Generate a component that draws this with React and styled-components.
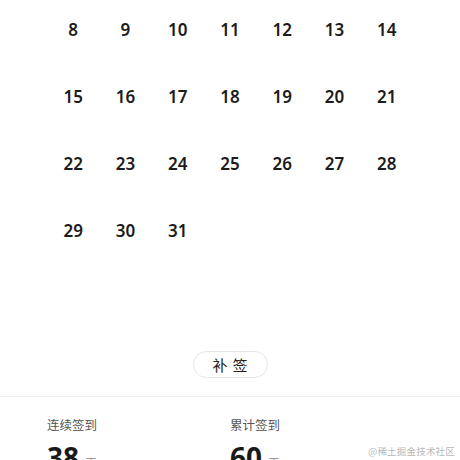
import React from "react";
import styled, { createGlobalStyle } from "styled-components";

const Global = createGlobalStyle`
  html, body { margin: 0; padding: 0; background: #fff; }
  body { font-family: "Noto Sans", "Noto Sans CJK SC", sans-serif; }
`;

const Page = styled.div`
  position: relative;
  width: 460px;
  height: 460px;
  overflow: hidden;
  background: #fff;
`;

const Calendar = styled.div`
  display: grid;
  grid-template-columns: repeat(7, 1fr);
  row-gap: 27px;
  padding: 9px 47px 0;
`;

const Day = styled.div`
  height: 40px;
  display: flex;
  align-items: center;
  justify-content: center;
  font-size: 17px;
  font-weight: 600;
  color: #1c1c1c;
`;

const ButtonRow = styled.div`
  display: flex;
  justify-content: center;
  margin-top: 101px;
`;

const Pill = styled.button`
  width: 75px;
  height: 27px;
  border: 1px solid #e6e6e6;
  border-radius: 14px;
  background: #fff;
  font-family: "Noto Sans CJK SC", sans-serif;
  font-size: 15px;
  letter-spacing: 5px;
  padding: 0 0 0 5px;
  color: #222;
  display: flex;
  align-items: center;
  justify-content: center;
`;

const Divider = styled.div`
  height: 1px;
  background: #f0f0f0;
  margin-top: 18px;
`;

const Stats = styled.div`
  display: grid;
  grid-template-columns: 1fr 1fr;
  padding: 19px 47px 0;
`;

const Stat = styled.div`
  display: flex;
  flex-direction: column;
  gap: 10px;
`;

const Label = styled.div`
  font-family: "Noto Sans CJK SC", sans-serif;
  font-size: 12.5px;
  line-height: 17px;
  color: #555;
`;

const Value = styled.div`
  display: flex;
  align-items: baseline;
  gap: 6px;
`;

const Num = styled.span`
  font-size: 28px;
  line-height: 28px;
  font-weight: 700;
  color: #1a1a1a;
`;

const Unit = styled.span`
  font-family: "Noto Sans CJK SC", sans-serif;
  font-size: 12px;
  color: #999;
`;

const Watermark = styled.div`
  position: absolute;
  right: 5px;
  bottom: 2px;
  font-family: "Noto Sans CJK SC", serif;
  font-size: 9.5px;
  color: #b8b8b8;
  letter-spacing: 0.2px;
`;

const days = Array.from({ length: 24 }, (_, i) => i + 8);

export default function App() {
  return (
    <Page>
      <Global />
      <Calendar>
        {days.map((d) => (
          <Day key={d}>{d}</Day>
        ))}
      </Calendar>
      <ButtonRow>
        <Pill>补签</Pill>
      </ButtonRow>
      <Divider />
      <Stats>
        <Stat>
          <Label>连续签到</Label>
          <Value>
            <Num>38</Num>
            <Unit>天</Unit>
          </Value>
        </Stat>
        <Stat>
          <Label>累计签到</Label>
          <Value>
            <Num>60</Num>
            <Unit>天</Unit>
          </Value>
        </Stat>
      </Stats>
      <Watermark>@稀土掘金技术社区</Watermark>
    </Page>
  );
}
